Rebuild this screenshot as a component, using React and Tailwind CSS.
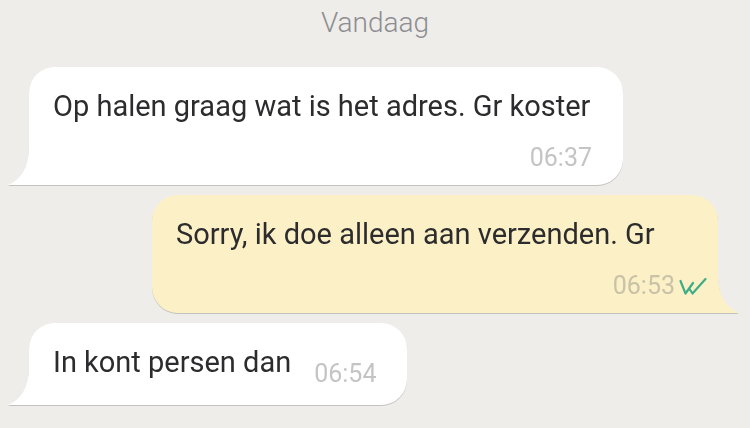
import React from "react";

const LeftTail = ({ fill }) => (
    <svg className="absolute left-[-21px] bottom-0" width="23" height="40" viewBox="0 0 23 40">
        <path d="M21 0 C21 20 15 34 0 40 L23 40 L23 0 Z" fill={fill} />
    </svg>
);

const RightTail = ({ fill }) => (
    <svg className="absolute right-[-21px] bottom-0" width="23" height="40" viewBox="0 0 23 40">
        <path d="M2 0 C2 20 8 34 23 40 L0 40 L0 0 Z" fill={fill} />
    </svg>
);

const DoubleCheck = () => (
    <svg width="28" height="17" viewBox="0 0 28 17" fill="none" stroke="#3fae86" strokeWidth="2.2" strokeLinecap="round" strokeLinejoin="round">
        <path d="M1.5 3 L6.5 15.5 L14 5" />
        <path d="M10.5 11 L13.5 15.5 L26.5 1" />
    </svg>
);

export default function App() {
    return (
        <div className="w-[750px] h-[428px] overflow-hidden bg-[#efedea] flex flex-col font-['Roboto',sans-serif] text-[#2c2c2e]">
            <div className="pt-[7px] h-[67px] text-center text-[28px] leading-[32px] text-[#8d8d92] font-light">
                Vandaag
            </div>

            {/* incoming */}
            <div className="relative ml-[29px] w-[594px] h-[118px] bg-white rounded-[26px] rounded-bl-none drop-shadow-[0_1px_0.5px_rgba(0,0,0,0.18)] flex flex-col">
                <LeftTail fill="#ffffff" />
                <p className="pl-[24px] pt-[21px] text-[29px] leading-[36px]">Op halen graag wat is het adres. Gr koster</p>
                <div className="flex justify-end pr-[31px] mt-[19px] text-[25px] leading-[30px] text-[#c4c4c4]">06:37</div>
            </div>

            {/* outgoing */}
            <div className="relative mt-[10px] ml-[152px] w-[566px] h-[118px] bg-[#fcf0c6] rounded-[26px] rounded-br-none drop-shadow-[0_1px_0.5px_rgba(0,0,0,0.18)] flex flex-col">
                <RightTail fill="#fcf0c6" />
                <p className="pl-[24px] pt-[21px] text-[29px] leading-[36px]">Sorry, ik doe alleen aan verzenden. Gr</p>
                <div className="flex justify-end items-center gap-[4px] pr-[11px] mt-[19px] text-[25px] leading-[30px] text-[#c9c2a8]">
                    <span>06:53</span>
                    <DoubleCheck />
                </div>
            </div>

            {/* incoming */}
            <div className="relative mt-[10px] ml-[29px] w-[378px] h-[82px] bg-white rounded-[26px] rounded-bl-none drop-shadow-[0_1px_0.5px_rgba(0,0,0,0.18)] flex items-start pl-[24px] pt-[21px] gap-[23px]">
                <LeftTail fill="#ffffff" />
                <p className="text-[29px] leading-[36px]">In kont persen dan</p>
                <span className="mt-[15px] text-[25px] leading-[30px] text-[#c4c4c4]">06:54</span>
            </div>
        </div>
    );
}
